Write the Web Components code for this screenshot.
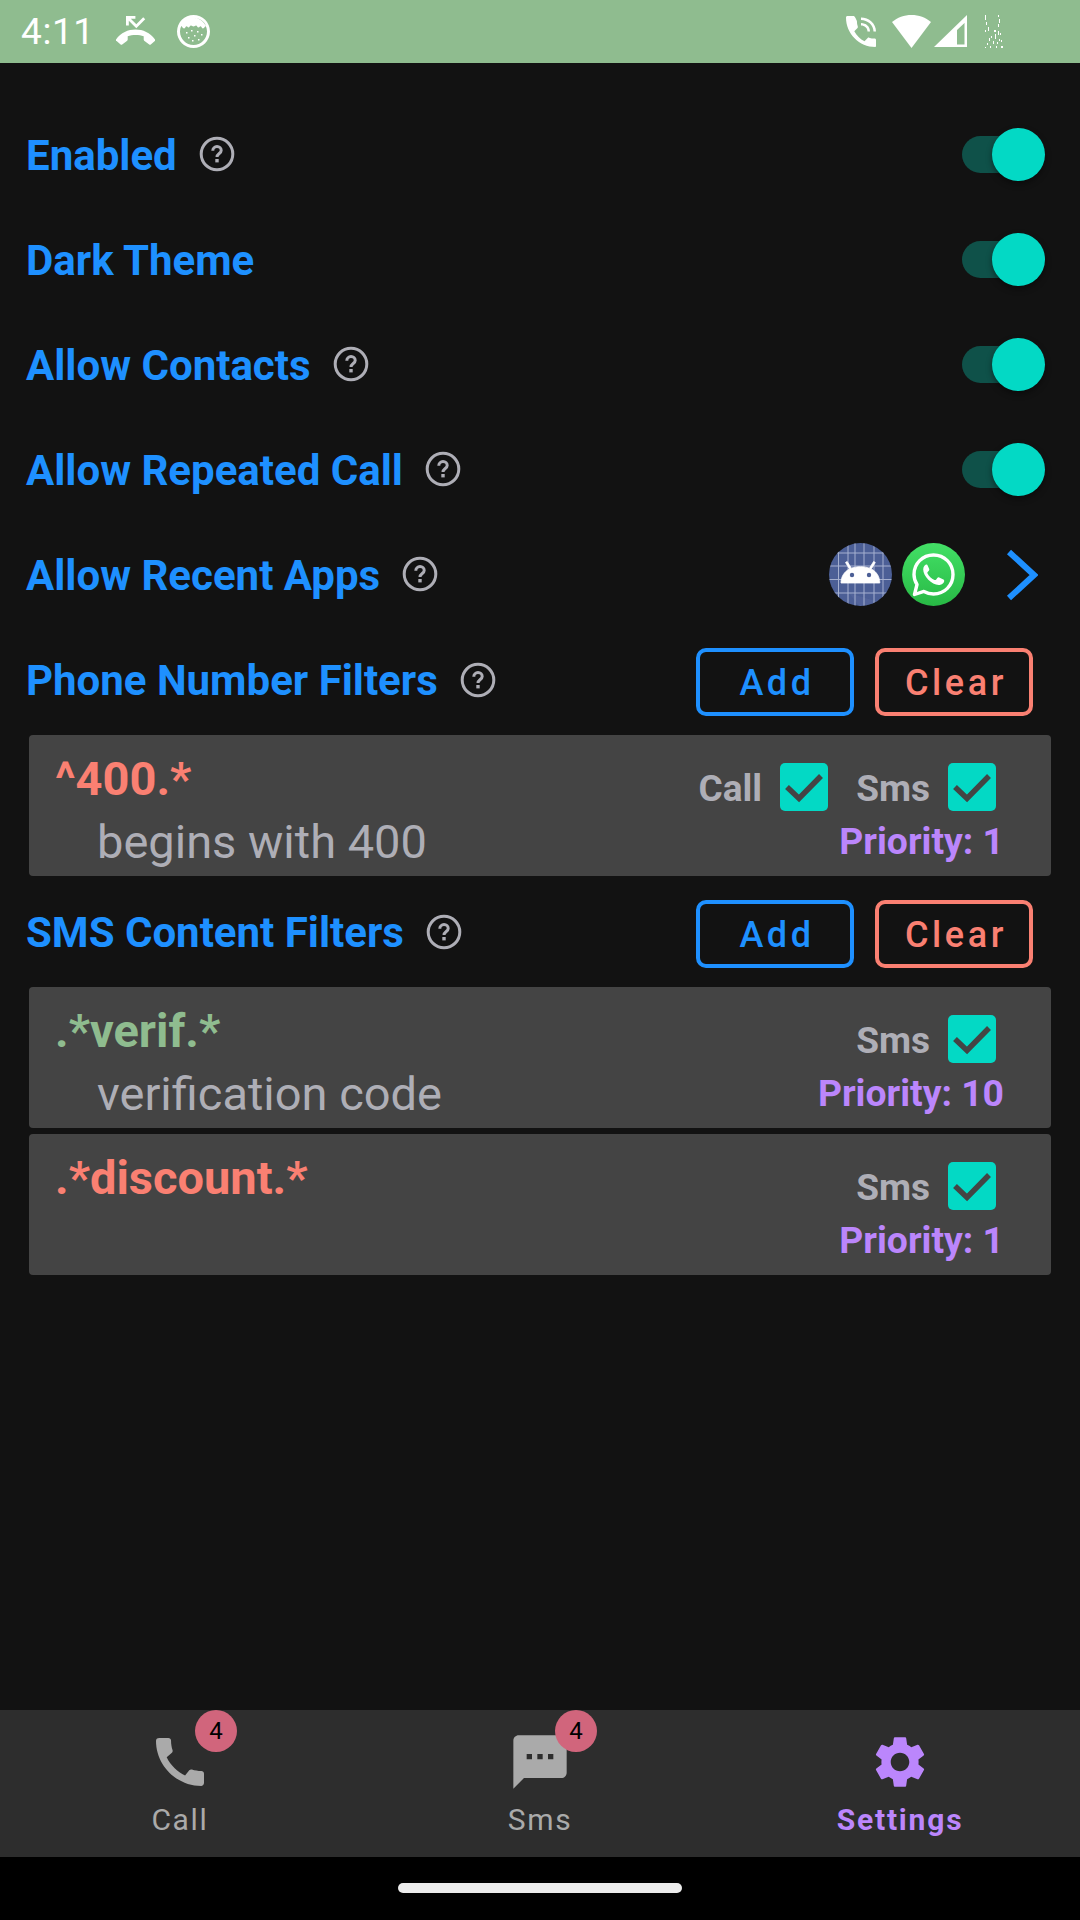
<!DOCTYPE html>
<html>
<head>
<meta charset="utf-8">
<style>
  html, body { margin: 0; padding: 0; background: #121212; }
  body { font-family: Roboto, "Liberation Sans", sans-serif; width: 1080px; height: 1920px; overflow: hidden; }
</style>
</head>
<body>
<app-shell>
  <status-bar slot="top"></status-bar>

  <setting-row label="Enabled" help><toggle-switch></toggle-switch></setting-row>
  <setting-row label="Dark Theme"><toggle-switch></toggle-switch></setting-row>
  <setting-row label="Allow Contacts" help><toggle-switch></toggle-switch></setting-row>
  <setting-row label="Allow Repeated Call" help><toggle-switch></toggle-switch></setting-row>
  <setting-row label="Allow Recent Apps" help><recent-apps></recent-apps></setting-row>

  <setting-row label="Phone Number Filters" help tall>
    <outline-button color="#1e90ff">Add</outline-button>
    <outline-button color="#fa8072">Clear</outline-button>
  </setting-row>
  <filter-card pattern="^400.*" desc="begins with 400" color="#fa8072" priority="1" call style="margin-bottom:3px"></filter-card>

  <setting-row label="SMS Content Filters" help tall>
    <outline-button color="#1e90ff">Add</outline-button>
    <outline-button color="#fa8072">Clear</outline-button>
  </setting-row>
  <filter-card pattern=".*verif.*" desc="verification code" color="#8fbc8f" priority="10" style="margin-bottom:6px"></filter-card>
  <filter-card pattern=".*discount.*" color="#fa8072" priority="1"></filter-card>

  <bottom-nav slot="bottom">
    <nav-tab label="Call" badge="4" icon="call"></nav-tab>
    <nav-tab label="Sms" badge="4" icon="sms"></nav-tab>
    <nav-tab label="Settings" icon="settings" active></nav-tab>
  </bottom-nav>
</app-shell>

<script>
  // HELPERS
  function tpl(html) {
    const t = document.createElement("template");
    t.innerHTML = html;
    return t;
  }

  class Base extends HTMLElement {
    constructor() {
      super();
      this.attachShadow({ mode: "open" });
    }
    render(html) {
      this.shadowRoot.appendChild(tpl(html).content.cloneNode(true));
    }
  }

  const ICONS = {
    call: "M20.01 15.38c-1.23 0-2.42-.2-3.53-.56-.35-.12-.74-.03-1.01.24l-1.57 1.97c-2.83-1.35-5.48-3.9-6.89-6.83l1.95-1.66c.27-.28.35-.67.24-1.02-.37-1.11-.56-2.3-.56-3.53 0-.54-.45-.99-.99-.99H4.19C3.65 3 3 3.24 3 3.99 3 13.28 10.73 21 20.01 21c.71 0 .99-.63.99-1.18v-3.45c0-.54-.45-.99-.99-.99z",
    sms: "M20 2H4c-1.1 0-1.99.9-1.99 2L2 22l4-4h14c1.1 0 2-.9 2-2V4c0-1.1-.9-2-2-2zM9 11H7V9h2v2zm4 0h-2V9h2v2zm4 0h-2V9h2v2z",
    settings: "M19.14 12.94c.04-.3.06-.61.06-.94 0-.32-.02-.64-.07-.94l2.03-1.58c.18-.14.23-.41.12-.61l-1.92-3.32c-.12-.22-.37-.29-.59-.22l-2.39.96c-.5-.38-1.03-.7-1.62-.94l-.36-2.54c-.04-.24-.24-.41-.48-.41h-3.84c-.24 0-.43.17-.47.41l-.36 2.54c-.59.24-1.13.57-1.62.94l-2.39-.96c-.22-.08-.47 0-.59.22L2.74 8.87c-.12.21-.08.47.12.61l2.03 1.58c-.05.3-.09.63-.09.94s.02.64.07.94l-2.03 1.58c-.18.14-.23.41-.12.61l1.92 3.32c.12.22.37.29.59.22l2.39-.96c.5.38 1.03.7 1.62.94l.36 2.54c.05.24.24.41.48.41h3.84c.24 0 .44-.17.47-.41l.36-2.54c.59-.24 1.13-.56 1.62-.94l2.39.96c.22.08.47 0 .59-.22l1.92-3.32c.12-.22.07-.47-.12-.61l-2.01-1.58zM12 15.6c-1.98 0-3.6-1.62-3.6-3.6s1.62-3.6 3.6-3.6 3.6 1.62 3.6 3.6-1.62 3.6-3.6 3.6z"
  };

  // the glitchy dots where the battery icon should be
  function noiseDots() {
    const dots = [[0,0,1,5],[13,0,1,2],[14,4,1,4],[1,7,1,3],[3,12,1,4],[13,9,1,3],[0,15,1,2],[9,15,2,2],[13,16,1,4],[15,18,1,2],[6,21,1,2],[10,19,1,5],[4,23,1,3],[14,24,1,2],[2,28,1,2],[8,26,1,3],[12,27,1,2],[16,25,1,2],[0,32,1,1],[5,31,1,2],[11,31,1,2],[16,31,2,2]];
    return dots.map(d => `<rect x="${d[0]}" y="${d[1]}" width="${d[2]}" height="${d[3]}"/>`).join("");
  }

  class AppShell extends Base {
    connectedCallback() {
      this.render(`
        <style>
          :host { display: flex; flex-direction: column; height: 1920px; background: #121212; }
          main { flex: 1; padding-top: 39px; }
        </style>
        <slot name="top"></slot>
        <main><slot></slot></main>
        <slot name="bottom"></slot>
      `);
    }
  }

  class StatusBar extends Base {
    connectedCallback() {
      this.render(`
        <style>
          :host { display: flex; align-items: center; height: 63px; background: #8fbc8f; color: #fff; padding-left: 21px; box-sizing: border-box; }
          .time { font-size: 37px; letter-spacing: .6px; width: 95px; }
          svg { display: block; fill: #fff; flex: none; }
          .spacer { flex: 1; }
        </style>
        <span class="time">4:11</span>
        <svg width="39" height="30" viewBox="0 0 39 30" style="margin-top:-2px">
          <path d="M0 23.5C5 16.5 12 13.5 19.5 13.5S34 16.5 39 23.5c.4.6.3 1.2-.2 1.6l-4 3.4c-.5.4-1.100.4-1.600 0l-5-3.800c-.4-.3-.5-.7-.5-1.100v-3.300c-2.400-.8-5-1.200-8-1.200s-5.600.4-8 1.200v3.300c0 .4-.1.800-.5 1.100l-5 3.800c-.5.4-1.100.4-1.600 0l-4-3.400C-.3 24.700-.4 24.100 0 23.500z"/>
          <path d="M10 0v9.500h2.800V4.800l7.500 7.500 8.900-9-2-2-6.900 7-5.500-5.500h4.600V0z"/>
        </svg>
        <svg width="33" height="33" viewBox="0 0 33 33" style="margin-left:22px">
          <path fill-rule="evenodd" d="M16.500 0a16.500 16.500 0 1 0 0 33 16.500 16.500 0 0 0 0-33zm0 3c7.500 0 13.500 6 13.500 13.500S24 30 16.500 30 3 24 3 16.500c0-2 .4-3.800 1.200-5.500 1.300 1 1.800 2.500 3 2.500s1.400-2.200 2.300-2.200 1 1.200 2 1.200 1.400-2 2.500-2 1.300 1 2.500 1 1.500-1 2.500-1 1.300 2 2.500 2 1.200-1.200 2-1.200 1.300 2.200 2.300 2.200 1.700-1.500 3-2.500C27.800 6.500 22.500 3 16.500 3z"/>
          <g><rect x="9" y="17" width="1.500" height="1.500"/><rect x="14" y="15" width="1.500" height="1.500"/><rect x="20" y="16" width="1.500" height="1.500"/><rect x="24" y="19" width="1.500" height="1.500"/><rect x="11" y="22" width="1.500" height="1.500"/><rect x="17" y="20" width="1.500" height="1.500"/><rect x="21" y="24" width="1.500" height="1.500"/><rect x="15" y="25" width="1.500" height="1.500"/></g>
        </svg>
        <span class="spacer"></span>
        <svg width="30" height="31" viewBox="0 0 30 31">
          <path d="M7.500 0 1.500 0C.6 0 0 .7 0 1.500 0 17.800 13.200 31 29.500 31c.3 0 .5-.6.5-1.200v-5.800c0-.8-.6-1.400-1.400-1.400-2 0-3.800-.3-5.500-.9-.5-.2-1-.1-1.400.3l-3.200 3.300c-4.300-2.200-8-5.800-10.200-10.100l3.200-3.300c.4-.4.500-.9.300-1.400-.6-1.700-.9-3.600-.9-5.600C9 .6 8.300 0 7.500 0z"/>
          <path d="M27.500 15.500h2.500C30 7.500 23 1.500 15 1.500V4c6.500 0 12.500 5 12.500 11.500zM21.500 15.500H24C24 10.500 20 7 15 7v2.500c3.500 0 6.500 2.500 6.500 6z"/>
        </svg>
        <svg width="39" height="33" viewBox="0 0 39 33" style="margin-left:16px">
          <path d="M19.500 0C12 0 5.500 2.500 0 7l19.500 26L39 7C33.500 2.500 27 0 19.500 0z"/>
        </svg>
        <svg width="33" height="33" viewBox="0 0 33 33" style="margin-left:3px">
          <path fill-rule="evenodd" d="M33 0v32H0zM30.500 8 23 15v14.500h7.500z"/>
        </svg>
        <svg width="19" height="33" viewBox="0 0 19 33" style="margin:0 76px 0 18px">${noiseDots()}</svg>
      `);
    }
  }

  class HelpIcon extends Base {
    connectedCallback() {
      this.render(`
        <style>
          :host { display: block; width: 36px; height: 36px; }
          svg { display: block; }
        </style>
        <svg width="36" height="36" viewBox="0 0 36 36" fill="none" stroke="#aeaeb6">
          <circle cx="18" cy="18" r="15.800" stroke-width="3"/>
          <path d="M13.800 14.800c0-2.500 1.900-4.200 4.200-4.200s4.200 1.700 4.200 3.900c0 3-4.200 3-4.200 6.600" stroke-width="3"/>
          <rect x="16.300" y="23" width="3.400" height="3.400" fill="#aeaeb6" stroke="none"/>
        </svg>
      `);
    }
  }

  class SettingRow extends Base {
    connectedCallback() {
      const label = this.getAttribute("label");
      const help = this.hasAttribute("help");
      const tall = this.hasAttribute("tall");
      this.render(`
        <style>
          :host { display: flex; align-items: center; height: ${tall ? 108 : 105}px; padding: 0 27px 0 26px; box-sizing: border-box; }
          .label { font-size: 42px; font-weight: 700; color: #1e90ff; white-space: nowrap; margin-top: ${tall ? -1 : 2}px; }
          help-icon { margin-left: 22px; margin-top: ${tall ? -3 : -1}px; }
          .end { margin-left: auto; display: flex; align-items: center; }
        </style>
        <span class="label">${label}</span>
        ${help ? "<help-icon></help-icon>" : ""}
        <div class="end"><slot></slot></div>
      `);
    }
  }

  class ToggleSwitch extends Base {
    connectedCallback() {
      this.render(`
        <style>
          :host { display: block; position: relative; width: 83px; height: 53px; margin-right: 8px; }
          .track { position: absolute; left: 0; top: 8px; width: 68px; height: 37px; border-radius: 19px; background: #0f5149; }
          .thumb { position: absolute; right: 0; top: 0; width: 53px; height: 53px; border-radius: 50%; background: #03d9c5; box-shadow: 0 3px 6px rgba(0,0,0,.4); }
        </style>
        <div class="track"></div>
        <div class="thumb"></div>
      `);
    }
  }

  class RecentApps extends Base {
    connectedCallback() {
      this.render(`
        <style>
          :host { display: flex; align-items: center; margin-right: 15px; }
          svg { display: block; flex: none; }
        </style>
        <svg width="63" height="63" viewBox="0 0 63 63">
          <defs><clipPath id="c"><circle cx="31.500" cy="31.500" r="31.500"/></clipPath></defs>
          <g clip-path="url(#c)">
            <rect width="63" height="63" fill="#4c5f96"/>
            <path d="M20 50 63 63H30z" fill="#5a6ba0" opacity=".5"/>
            <path d="M0 10H63M0 23H63M0 36.500H63M0 50H63M9.500 0V63M19 0V63M26 0V63M35 0V63M45 0V63M54 0V63" stroke="#c3cbe2" stroke-width="1" opacity=".75"/>
          </g>
          <path d="M12 40c0-6.500 3.500-11.500 8.500-14l-4-6.500 1.700-1 4.200 6.700c2.800-1 5.700-1.500 9-1.500s6.200.5 9 1.500l4.200-6.700 1.700 1-4 6.500c5 2.500 8.500 7.500 8.500 14z" fill="#fff" stroke="#fff" stroke-width=".8"/>
          <circle cx="23" cy="32" r="2.200" fill="#4c5f96"/>
          <circle cx="40" cy="32" r="2.200" fill="#4c5f96"/>
        </svg>
        <svg width="63" height="63" viewBox="0 0 63 63" style="margin-left:10px">
          <defs><linearGradient id="w" x1="0" y1="0" x2="0" y2="1"><stop offset="0" stop-color="#43e066"/><stop offset="1" stop-color="#28b945"/></linearGradient></defs>
          <circle cx="31.500" cy="31.500" r="31.500" fill="url(#w)"/>
          <path d="M12.500 51.500 15 41.500c-2-3-3-6.500-3-10C12 20.500 20.500 12 31.500 12S51 20.500 51 31.500 42.500 51 31.500 51c-3.500 0-6.700-1-9.600-2.600z" fill="none" stroke="#fff" stroke-width="3.400" stroke-linejoin="round"/>
          <path d="M24.500 21.500c-1 0-3.300 1.800-3.300 5 0 6.500 8.500 15.500 15.500 15.500 3.500 0 5.500-2.500 5.500-4 0-1-.2-1.300-.8-1.600l-4.200-2c-.7-.3-1.200-.2-1.700.4l-1.500 1.900c-.4.500-.9.500-1.500.2-3.300-1.500-5.500-3.700-7-6.500-.3-.6-.2-1 .2-1.400l1.300-1.600c.3-.4.400-.8.200-1.300l-1.800-4c-.3-.6-.6-.6-.9-.6z" fill="#fff"/>
        </svg>
        <svg width="32" height="52" viewBox="0 0 32 52" style="margin-left:41px">
          <path d="M3 3 28 26 3 49" fill="none" stroke="#1e90ff" stroke-width="6"/>
        </svg>
      `);
    }
  }

  class OutlineButton extends Base {
    connectedCallback() {
      const color = this.getAttribute("color");
      this.render(`
        <style>
          :host { display: flex; align-items: center; justify-content: center; width: 158px; height: 68px; margin: 1px 0 0 21px; padding: 2px 0 0 4px; box-sizing: border-box;
            border: 4px solid ${color}; border-radius: 10px; color: ${color}; font-size: 36px; font-weight: 500; letter-spacing: 3.600px; }
          :host(:last-child) { margin-right: 20px; }
        </style>
        <slot></slot>
      `);
    }
  }

  class CheckBox extends Base {
    connectedCallback() {
      this.render(`
        <style>
          :host { display: block; width: 48px; height: 48px; border-radius: 5px; background: #03d9c5; }
          svg { display: block; }
        </style>
        <svg width="48" height="48" viewBox="0 0 48 48">
          <path d="M7 24 19 35.500 41 13" fill="none" stroke="#444" stroke-width="5.500"/>
        </svg>
      `);
    }
  }

  class FilterCard extends Base {
    connectedCallback() {
      const pattern = this.getAttribute("pattern");
      const desc = this.getAttribute("desc") || "";
      const color = this.getAttribute("color");
      const priority = this.getAttribute("priority");
      const call = this.hasAttribute("call");
      this.render(`
        <style>
          :host { display: flex; justify-content: space-between; height: 141px; margin: 0 29px 0 29px; padding: 0 47px 0 26px; box-sizing: border-box; background: #444; border-radius: 4px; }
          .left { display: flex; flex-direction: column; }
          .pattern { font-size: 47px; font-weight: 700; line-height: 52px; margin-top: 18px; color: ${color}; }
          .desc { font-size: 47px; line-height: 52px; margin: 11px 0 0 42px; color: #aeaeb6; }
          .right { display: flex; flex-direction: column; align-items: flex-end; }
          .checks { display: flex; align-items: center; margin-top: 28px; margin-right: 8px; font-size: 37px; font-weight: 700; color: #aeaeb6; }
          .checks span { margin-right: 18px; padding-top: 2px; }
          .checks check-box + span { margin-left: 28px; }
          .priority { font-size: 37.300px; font-weight: 700; color: #bb86fc; line-height: 42px; margin-top: 9px; }
        </style>
        <div class="left">
          <span class="pattern">${pattern}</span>
          ${desc ? `<span class="desc">${desc}</span>` : ""}
        </div>
        <div class="right">
          <div class="checks">
            ${call ? "<span>Call</span><check-box></check-box>" : ""}
            <span>Sms</span><check-box></check-box>
          </div>
          <span class="priority">Priority: ${priority}</span>
        </div>
      `);
    }
  }

  class BottomNav extends Base {
    connectedCallback() {
      this.render(`
        <style>
          :host { display: block; background: #000; height: 210px; }
          .bar { display: grid; grid-template-columns: repeat(3, 1fr); height: 147px; background: #2d2d2d; }
          .home { display: flex; justify-content: center; padding-top: 26px; }
          .pill { width: 284px; height: 10px; border-radius: 5px; background: #ececec; }
        </style>
        <div class="bar"><slot></slot></div>
        <div class="home"><div class="pill"></div></div>
      `);
    }
  }

  class NavTab extends Base {
    connectedCallback() {
      const label = this.getAttribute("label");
      const badge = this.getAttribute("badge");
      const icon = this.getAttribute("icon");
      const active = this.hasAttribute("active");
      const color = active ? "#bb86fc" : "#aaa";
      const size = active ? 62 : 64;
      this.render(`
        <style>
          :host { display: flex; flex-direction: column; align-items: center; padding-top: ${active ? 21 : 20}px; box-sizing: border-box; color: ${color}; position: relative; }
          svg { display: block; fill: ${color}; }
          .label { font-size: 30px; letter-spacing: ${active ? 1.8 : 1.7}px; font-weight: ${active ? 700 : 400}; line-height: 36px; margin-top: ${active ? 9 : 8}px; }
          .badge { position: absolute; top: 0; left: 195px; width: 42px; height: 42px; border-radius: 50%; background: #d1657c; color: #000; font-size: 24px; display: flex; align-items: center; justify-content: center; }
        </style>
        <svg width="${size}" height="${size}" viewBox="0 0 24 24"><path d="${ICONS[icon]}"/></svg>
        <span class="label">${label}</span>
        ${badge ? `<span class="badge">${badge}</span>` : ""}
      `);
    }
  }

  customElements.define("help-icon", HelpIcon);
  customElements.define("toggle-switch", ToggleSwitch);
  customElements.define("recent-apps", RecentApps);
  customElements.define("outline-button", OutlineButton);
  customElements.define("check-box", CheckBox);
  customElements.define("nav-tab", NavTab);
  customElements.define("bottom-nav", BottomNav);
  customElements.define("filter-card", FilterCard);
  customElements.define("setting-row", SettingRow);
  customElements.define("status-bar", StatusBar);
  customElements.define("app-shell", AppShell);
</script>
</body>
</html>
